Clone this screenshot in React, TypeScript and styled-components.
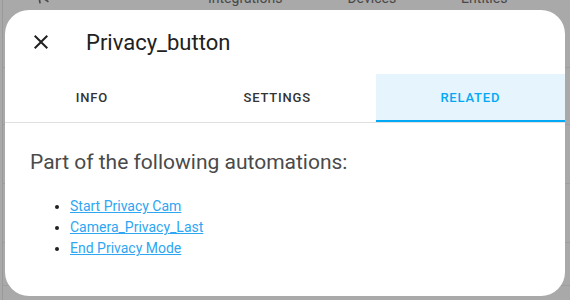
import styled, { createGlobalStyle } from "styled-components";

const GlobalStyle = createGlobalStyle`
  html, body {
    margin: 0;
    padding: 0;
    background: #a9a9a9;
    font-family: Roboto, "Liberation Sans", sans-serif;
  }
`;

const automations = ["Start Privacy Cam", "Camera_Privacy_Last", "End Privacy Mode"];
const tabs = ["Info", "Settings", "Related"];

export default function App() {
  return (
    <>
      <GlobalStyle />
      <Screen>
        <BackPage>
          <BackHeader>
            <BackArrow>
              <svg width="20" height="20" viewBox="0 0 24 24">
                <path d="M20,11V13H8L13.5,18.5L12.08,19.92L4.16,12L12.08,4.08L13.5,5.5L8,11H20Z" fill="#4a4a4a" />
              </svg>
            </BackArrow>
            <BackTabs>
              <BackTab>Integrations</BackTab>
              <BackTab>Devices</BackTab>
              <BackTab>Entities</BackTab>
            </BackTabs>
          </BackHeader>
          <BackRow $height={57} />
          <BackRow $height={56} />
          <BackRow $height={58} />
          <BackRow $height={58} />
          <BackRow $height={42} />
        </BackPage>

        <Dialog>
          <DialogHeader>
            <CloseButton aria-label="close">
              <svg width="24" height="24" viewBox="0 0 24 24">
                <path
                  d="M19,6.41L17.59,5L12,10.59L6.41,5L5,6.41L10.59,12L5,17.59L6.41,19L12,13.41L17.59,19L19,17.59L13.41,12L19,6.41Z"
                  fill="#212121"
                />
              </svg>
            </CloseButton>
            <Title>Privacy_button</Title>
          </DialogHeader>
          <TabBar>
            {tabs.map((t) => (
              <Tab key={t} $active={t === "Related"}>
                {t}
              </Tab>
            ))}
          </TabBar>
          <Content>
            <Heading>Part of the following automations:</Heading>
            <List>
              {automations.map((a) => (
                <li key={a}>
                  <Link href="#">{a}</Link>
                </li>
              ))}
            </List>
          </Content>
        </Dialog>
      </Screen>
    </>
  );
}

const Screen = styled.div`
  position: relative;
  width: 570px;
  height: 300px;
  overflow: hidden;
  background: #a9a9a9;
`;
const BackPage = styled.div`
  display: flex;
  flex-direction: column;
  margin-left: 2px;
  border-left: 1px solid #9a9a9a;
  height: 100%;
`;
const BackHeader = styled.div`
  display: flex;
  align-items: flex-end;
  height: 24px;
  margin-top: -14px;
`;
const BackArrow = styled.div`
  display: flex;
  width: 20px;
  height: 20px;
  margin: 0 0 2px 30px;
  transform: rotate(35deg);
`;
const BackTabs = styled.div`
  display: flex;
  margin-left: 155px;
  height: 24px;
  align-items: center;
`;
const BackTab = styled.span`
  font-size: 14px;
  color: #484848;
  margin-right: 65px;
`;
const BackRow = styled.div<{ $height: number }>`
  height: ${(p) => p.$height}px;
  border-bottom: 1px solid #9e9e9e;
`;
const Dialog = styled.div`
  position: absolute;
  left: 5px;
  top: 10px;
  width: 560px;
  height: 286px;
  background: #fff;
  border-radius: 24px;
  display: flex;
  flex-direction: column;
  overflow: hidden;
`;
const DialogHeader = styled.div`
  display: flex;
  align-items: center;
  height: 64px;
  padding-left: 12px;
`;
const CloseButton = styled.button`
  display: flex;
  align-items: center;
  justify-content: center;
  width: 48px;
  height: 48px;
  padding: 0;
  border: none;
  background: none;
  cursor: pointer;
`;
const Title = styled.div`
  margin-left: 21px;
  font-size: 22px;
  color: #212121;
`;
const TabBar = styled.div`
  display: flex;
  height: 48px;
  border-bottom: 1px solid #e0e0e0;
`;
const Tab = styled.div<{ $active: boolean }>`
  flex: 1 1 auto;
  display: flex;
  align-items: center;
  justify-content: center;
  padding: 0 24px;
  font-size: 13px;
  font-weight: 500;
  letter-spacing: 0.8px;
  text-transform: uppercase;
  color: ${(p) => (p.$active ? "#03a9f4" : "#333")};
  background: ${(p) => (p.$active ? "#e5f4fd" : "transparent")};
  border-bottom: 2px solid ${(p) => (p.$active ? "#03a9f4" : "transparent")};
  &:first-child {
    padding-left: 30px;
  }
  &:nth-child(2) {
    padding-left: 30px;
  }
`;
const Content = styled.div`
  padding: 25px 24px 24px 25px;
`;
const Heading = styled.div`
  font-size: 21px;
  line-height: 28px;
  color: #4a4a4a;
`;
const List = styled.ul`
  margin: 20px 0 0;
  padding-left: 40px;
  font-size: 14px;
  line-height: 21px;
  color: #212121;
`;
const Link = styled.a`
  color: #2ea6f2;
`;
